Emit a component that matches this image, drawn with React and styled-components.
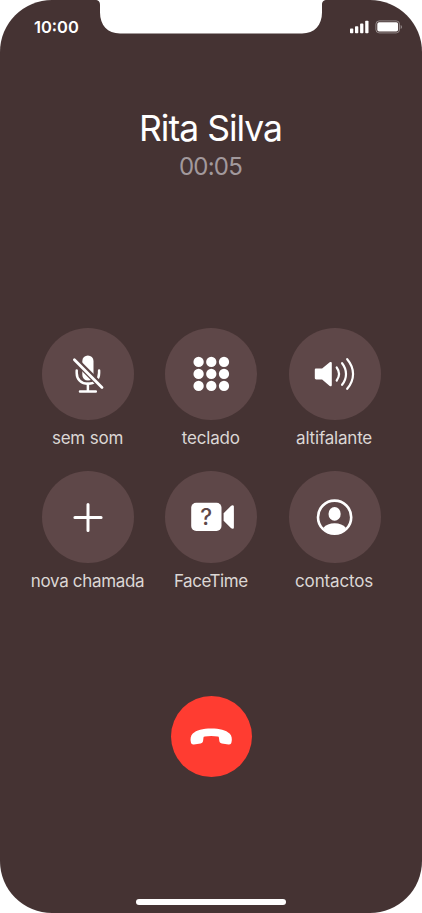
import React from 'react';
import styled, { createGlobalStyle } from 'styled-components';

const colors = {
  background: '#453333',
  button: '#5e4748',
  label: '#dcd7d5',
  muted: '#a2999c',
  danger: '#ff3c31',
  white: '#fff',
};

const GlobalStyle = createGlobalStyle`
  body {
    margin: 0;
    background: ${colors.white};
    font-family: Inter, "Liberation Sans", sans-serif;
    overflow: hidden;
  }
`;

const Phone = styled.main`
  position: relative;
  display: flex;
  flex-direction: column;
  align-items: center;
  box-sizing: border-box;
  width: 422px;
  height: 913px;
  border-radius: 52px;
  overflow: hidden;
  background: ${colors.background};
`;

// hangs over the status bar
const Notch = styled.svg`
  position: absolute;
  top: 0;
  left: 90px;
`;

const StatusBar = styled.header`
  display: flex;
  flex: none;
  justify-content: space-between;
  align-items: center;
  box-sizing: border-box;
  width: 100%;
  height: 54px;
  padding: 0 19px 0 34px;
`;

const Time = styled.span`
  color: ${colors.white};
  font-size: 16.5px;
  font-weight: 600;
  line-height: 20px;
`;

const Caller = styled.section`
  display: flex;
  flex: none;
  flex-direction: column;
  align-items: center;
  height: 274.3px;
`;

const Name = styled.h1`
  margin: 53px 1px 0 0;
  color: ${colors.white};
  font-size: 35.5px;
  font-weight: 400;
  line-height: 44px;
  letter-spacing: -1px;
`;

const Duration = styled.span`
  margin: 1px 1px 0 0;
  color: ${colors.muted};
  font-size: 24px;
  font-weight: 400;
  line-height: 30px;
  letter-spacing: -0.8px;
`;

const Actions = styled.div`
  display: grid;
  grid-template-columns: repeat(3, 123.3px);
  grid-auto-rows: 143px;
  padding-left: 0.6px;
`;

const Action = styled.button`
  display: flex;
  flex-direction: column;
  align-items: center;
  padding: 0;
  border: 0;
  background: none;
  font-family: inherit;
`;

const Circle = styled.span`
  display: flex;
  flex: none;
  width: 92px;
  height: 92px;
  border-radius: 50%;
  background: ${colors.button};
`;

const Label = styled.span`
  margin: 7.5px 1px 0 0;
  color: ${colors.label};
  font-size: 17px;
  line-height: 21px;
  letter-spacing: ${({ $spacing }) => $spacing}px;
  white-space: nowrap;
`;

const HangUp = styled.button`
  display: flex;
  flex: none;
  width: 81px;
  height: 81px;
  margin: 81.3px 0 0 1px;
  padding: 0;
  border: 0;
  border-radius: 50%;
  background: ${colors.danger};
`;

const HomeIndicator = styled.div`
  width: 150.5px;
  height: 5.5px;
  margin: auto 0 8.5px;
  border-radius: 3px;
  background: ${colors.white};
`;

const QuestionMark = styled.text`
  fill: ${colors.button};
  font-size: 22.5px;
  font-weight: 500;
  text-anchor: middle;
`;

const Icon = ({ viewBox = '0 0 92 92', children }) => (
  <svg width="92" height="92" viewBox={viewBox} fill="#fff" strokeLinecap="round">
    {children}
  </svg>
);

const MutedIcon = () => (
  <Icon viewBox="0 -0.8 92 92">
    <rect x="40.3" y="26.6" width="11.2" height="25.2" rx="5.6" />
    <g fill="none" stroke="#fff" strokeWidth="2.5">
      <path d="M34.7 41.8v2.4c0 6.6 4.7 10.8 11.2 10.8s11.2-4.2 11.2-10.8v-2.4" />
      <path d="M45.9 55v7.8M38 62.8h15.8" />
    </g>
    <path d="M33.5 31.5 59.5 57.5" stroke={colors.button} strokeWidth="6.2" strokeLinecap="butt" />
    <path d="M32.4 31 60 58.6" stroke="#fff" strokeWidth="2.8" />
  </Icon>
);

const KeypadIcon = () => (
  <Icon viewBox="0 -0.7 92 92">
    {[33.2, 45.2, 57.2].map(y =>
      [33.6, 46.3, 59].map(x => <circle key={`${x}-${y}`} cx={x} cy={y} r="5.15" />)
    )}
  </Icon>
);

const SpeakerIcon = () => (
  <Icon viewBox="0 -0.7 92 92">
    <path d="M27.2 39.8h5.9l7.6-6.2c1-.8 2.1-.4 2.1.8v22c0 1.2-1.1 1.6-2.1.8l-7.6-6.4h-5.9c-.9 0-1.4-.5-1.4-1.4v-8.2c0-.9.5-1.4 1.4-1.4Z" />
    <g fill="none" stroke="#fff" strokeWidth="2.2">
      <path d="M47.7 38.8c2.9 4 2.9 9 0 13" />
      <path d="M53.1 34.5c5.2 6.6 5.2 15 0 21.6" />
      <path d="M58.2 30.5c7.8 9.2 7.8 20.4 0 29.6" />
    </g>
  </Icon>
);

const PlusIcon = () => (
  <Icon>
    <path d="M46 33.4v26.1M32.9 46.4h26.2" stroke="#fff" strokeWidth="3" />
  </Icon>
);

const FaceTimeIcon = () => (
  <Icon>
    <rect x="26.2" y="31.8" width="30.3" height="28.2" rx="5" />
    <path d="m58.6 42.3 7.3-7.3c1.4-1.3 3-1 3 .8v20.4c0 1.8-1.6 2.1-3 .8l-7.3-7.3Z" />
    <QuestionMark x="41.3" y="54.3">?</QuestionMark>
  </Icon>
);

const ContactIcon = () => (
  <Icon>
    <circle cx="45.6" cy="46.2" r="16.6" fill="none" stroke="#fff" strokeWidth="2.6" />
    <ellipse cx="45.6" cy="42.9" rx="6.1" ry="6.9" />
    <path d="M34.4 56.7c2.4-3 6.4-4.5 11.2-4.5s8.8 1.5 11.2 4.5c-2.4 3.6-6.5 6.2-11.2 6.2s-8.8-2.6-11.2-6.2Z" />
  </Icon>
);

const actions = [
  { label: 'sem som', icon: MutedIcon, spacing: -0.2 },
  { label: 'teclado', icon: KeypadIcon, spacing: -0.15 },
  { label: 'altifalante', icon: SpeakerIcon, spacing: -0.2 },
  { label: 'nova chamada', icon: PlusIcon, spacing: -0.33 },
  { label: 'FaceTime', icon: FaceTimeIcon, spacing: -0.45 },
  { label: 'contactos', icon: ContactIcon, spacing: -0.15 },
];

const App = () => (
  <>
    <GlobalStyle />
    <Phone>
      <Notch width="242" height="34" viewBox="0 0 242 34" fill="#fff">
        <path d="M5 0C8.6 0 10 1.8 10 5v7.5c0 12.5 7.5 21 20 21h182c12.5 0 20-8.5 20-21V5c0-3.2 1.4-5 5-5Z" />
      </Notch>
      <StatusBar>
        <Time>10:00</Time>
        <svg width="53" height="14" viewBox="0 0 53 14" fill="#fff">
          <rect x="0" y="8.6" width="3.3" height="4.7" rx=".8" />
          <rect x="5" y="6.3" width="3.3" height="7" rx=".8" />
          <rect x="10.1" y="3.6" width="3.3" height="9.7" rx=".8" />
          <rect x="15.2" y=".8" width="3.3" height="12.5" rx=".8" />
          <rect x="25.9" y=".9" width="23.6" height="12" rx="3.3" fill="none" stroke="#fff" strokeOpacity=".4" />
          <rect x="27.3" y="2.3" width="20.8" height="9.2" rx="1.8" />
          <path d="M50.7 5v4c1.7-.6 1.7-3.4 0-4Z" fillOpacity=".45" />
        </svg>
      </StatusBar>
      <Caller>
        <Name>Rita Silva</Name>
        <Duration>00:05</Duration>
      </Caller>
      <Actions>
        {actions.map(({ label, icon: ActionIcon, spacing }) => (
          <Action key={label}>
            <Circle><ActionIcon /></Circle>
            <Label $spacing={spacing}>{label}</Label>
          </Action>
        ))}
      </Actions>
      <HangUp aria-label="desligar">
        <svg width="81" height="81" viewBox="0 0 81 81" fill="#fff">
          <path d="M40.2 32.4c8.3 0 14.9 1.6 18.4 5.1 2.2 2.2 2.7 5.6 1.9 8.8-.4 1.7-1.3 2.3-3 2.1l-6.7-1c-1.7-.3-2.3-.9-2.5-2.6l-.4-3.2c-.1-.8-.4-1-1.2-1.2-3.8-.7-9.2-.7-13 0-.8.2-1.1.4-1.2 1.2l-.4 3.2c-.2 1.7-.8 2.3-2.5 2.6l-6.7 1c-1.7.2-2.6-.4-3-2.1-.8-3.2-.3-6.6 1.9-8.8 3.5-3.5 10.1-5.1 18.4-5.1Z" />
        </svg>
      </HangUp>
      <HomeIndicator />
    </Phone>
  </>
);

export default App;
